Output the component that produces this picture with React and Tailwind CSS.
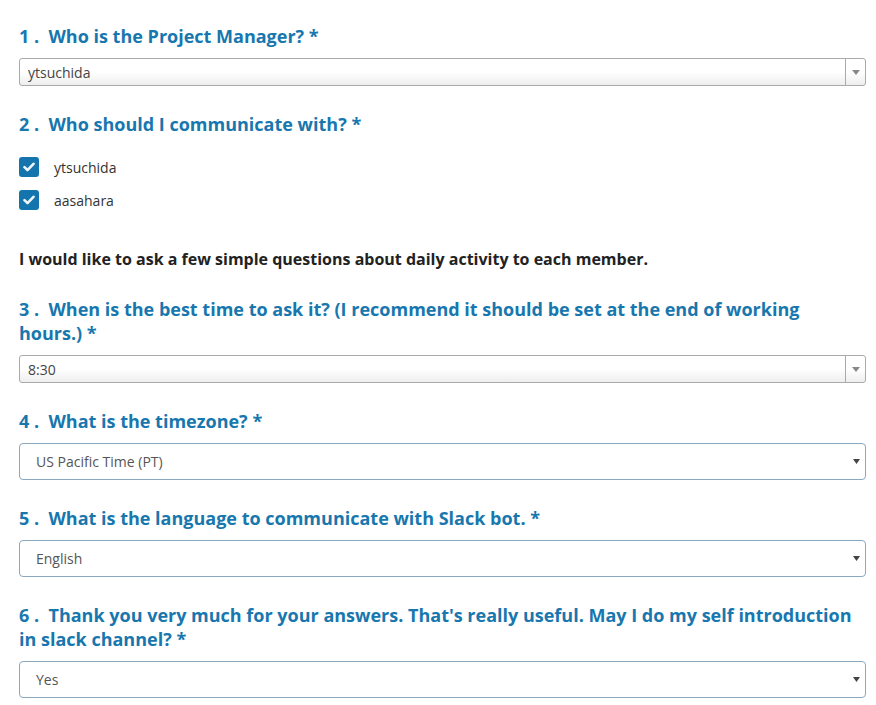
const font = { fontFamily: '"Open Sans", "Noto Sans", sans-serif' }

function Heading({ children }) {
  return (
    <h3 className="text-[18px] leading-[24px] font-bold text-[#1777ae]">
      {children}
    </h3>
  )
}

function ComboSelect({ value }) {
  return (
    <div className="flex h-[28px] items-stretch rounded-[3px] border border-[#aaaaaa] bg-gradient-to-b from-white from-50% to-[#eeeeee] text-[14px] text-[#444]">
      <div className="flex flex-1 items-center pl-[8px]">{value}</div>
      <div className="flex w-[20px] items-center justify-center border-l border-[#aaaaaa]">
        <svg width="8" height="5" viewBox="0 0 8 5">
          <path d="M0 0h8L4 5z" fill="#888" />
        </svg>
      </div>
    </div>
  )
}

function NativeSelect({ value }) {
  return (
    <div className="flex h-[37px] items-center justify-between rounded-[4px] border border-[#8aa8bf] bg-white pl-[16px] pr-[5px] text-[14px] text-[#555]">
      <span>{value}</span>
      <svg width="7" height="5" viewBox="0 0 7 5">
        <path d="M0 0h7L3.5 5z" fill="#444" />
      </svg>
    </div>
  )
}

function Check({ label }) {
  return (
    <label className="flex h-[20px] items-center gap-[15px] text-[14px] text-[#333]">
      <span className="flex h-[20px] w-[20px] items-center justify-center rounded-[3px] bg-[#1474ae]">
        <svg width="12" height="10" viewBox="0 0 12 10">
          <path d="M1.5 5.2l3 3 6-6.4" fill="none" stroke="#eef4f8" strokeWidth="2.6" strokeLinecap="round" strokeLinejoin="round" />
        </svg>
      </span>
      {label}
    </label>
  )
}

export default function App() {
  return (
    <div className="min-h-[705px] bg-white pl-[19px] pr-[10px] pt-[24px]" style={font}>
      <Heading>1 .&nbsp; Who is the Project Manager? *</Heading>
      <div className="mt-[10px]">
        <ComboSelect value="ytsuchida" />
      </div>

      <div className="mt-[26px]">
        <Heading>2 .&nbsp; Who should I communicate with? *</Heading>
      </div>
      <div className="mt-[21px] flex flex-col gap-[13px]">
        <Check label="ytsuchida" />
        <Check label="aasahara" />
      </div>

      <p className="mt-[38px] text-[16px] leading-[22px] font-bold text-[#222]">
        I would like to ask a few simple questions about daily activity to each member.
      </p>

      <div className="mt-[27px]">
        <Heading>3 .&nbsp; When is the best time to ask it? (I recommend it should be set at the end of working hours.) *</Heading>
      </div>
      <div className="mt-[10px]">
        <ComboSelect value="8:30" />
      </div>

      <div className="mt-[26px]">
        <Heading>4 .&nbsp; What is the timezone? *</Heading>
      </div>
      <div className="mt-[10px]">
        <NativeSelect value="US Pacific Time (PT)" />
      </div>

      <div className="mt-[26px]">
        <Heading>5 .&nbsp; What is the language to communicate with Slack bot. *</Heading>
      </div>
      <div className="mt-[10px]">
        <NativeSelect value="English" />
      </div>

      <div className="mt-[26px]">
        <Heading>6 .&nbsp; Thank you very much for your answers. That's really useful. May I do my self introduction in slack channel? *</Heading>
      </div>
      <div className="mt-[10px]">
        <NativeSelect value="Yes" />
      </div>
    </div>
  )
}
